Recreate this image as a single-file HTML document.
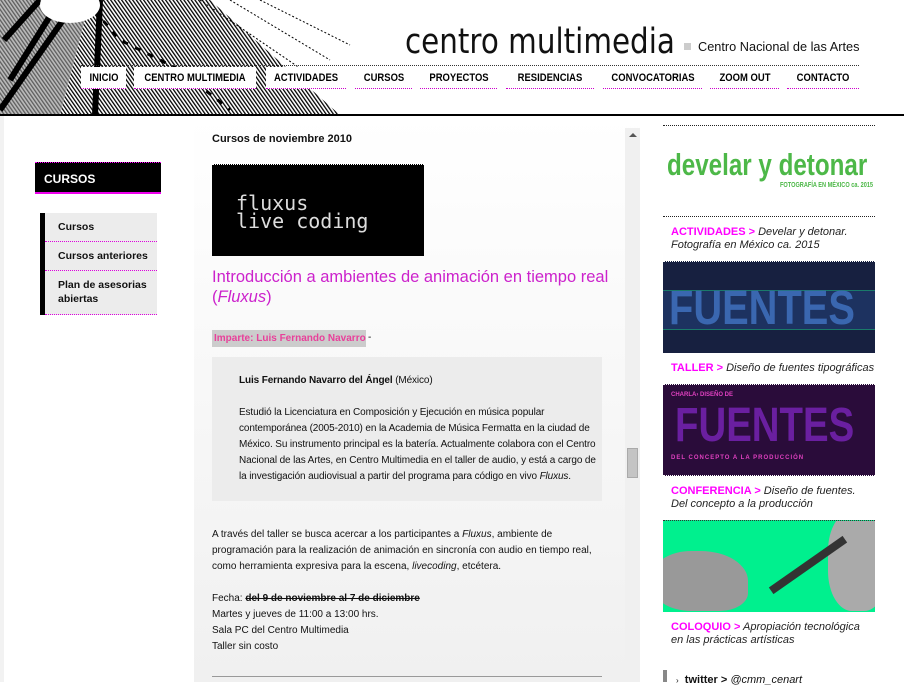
<!DOCTYPE html>
<html><head><meta charset="utf-8">
<style>
*{margin:0;padding:0;box-sizing:border-box}
body{width:904px;height:682px;overflow:hidden;background:#fff;font-family:"Liberation Sans",Arial,sans-serif;position:relative;color:#111}
.abs{position:absolute;white-space:nowrap}
.wrap{white-space:normal}
.nav a{position:absolute;top:67px;height:22px;background:#fff;color:#000;text-decoration:none;border-bottom:1px dotted #c0c;overflow:visible}
.nav a span{position:absolute;left:50%;top:5px;font:bold 11px "Liberation Sans",sans-serif;white-space:nowrap;transform:translateX(-50%) scaleX(0.86)}
.nav a.n{background:transparent}
.cap{font-size:11px;line-height:13px;color:#222;font-style:italic;white-space:normal}
.cap b{color:#f0f;font-style:normal}
.dot{border-top:1px dotted #222}
.sq{display:inline-block;transform-origin:0 0;white-space:nowrap}
</style></head><body>
<div class="abs" style="left:0;top:0;width:380px;height:115px;overflow:hidden;background:#fff">
<svg width="380" height="115">
<defs><pattern id="st" width="3" height="3" patternUnits="userSpaceOnUse" patternTransform="rotate(-35)"><rect width="1.3" height="3" fill="#000"/></pattern></defs>
<path d="M90 0 L210 0 L340 115 L60 115 Z" fill="url(#st)"/>
<path d="M0 0 L90 0 L60 115 L0 115Z" fill="#bbb"/>
<path d="M0 0 L90 0 L60 115 L0 115Z" fill="url(#st)" opacity="0.5"/>
<path d="M4 40 L40 0 M10 80 L60 0 M0 110 L70 10 M95 115 L100 0" stroke="#000" stroke-width="6"/>
<path d="M85 0 L120 40 L180 70 L230 110" stroke="#000" stroke-width="3" stroke-dasharray="6 8" fill="none"/>
<path d="M200 0 L310 75 M230 0 L330 60 M260 0 L350 45" stroke="#000" stroke-width="1" stroke-dasharray="2 2"/>
<ellipse cx="70" cy="5" rx="30" ry="18" fill="#fff"/>
</svg></div>
<div class="abs" style="left:405px;top:22px;font-size:35px;color:#111;font-family:'DejaVu Sans',sans-serif"><span class="sq" style="transform:scaleX(0.84)">centro multimedia</span></div>
<div class="abs" style="left:684px;top:43px;width:7px;height:7px;background:#ccc"></div>
<div class="abs" style="left:698px;top:39px;font-size:13px"><span class="sq" style="transform:scaleX(0.98)">Centro Nacional de las Artes</span></div>
<div class="abs" style="left:81px;top:65px;width:778px;border-top:1px dotted #333"></div>
<div class="nav">
<a style="left:81px;width:45px"><span>INICIO</span></a>
<a style="left:134px;width:122px"><span>CENTRO MULTIMEDIA</span></a>
<a style="left:266px;width:80px"><span>ACTIVIDADES</span></a>
<a class="n" style="left:355px;width:57px"><span>CURSOS</span></a>
<a class="n" style="left:420px;width:77px"><span>PROYECTOS</span></a>
<a class="n" style="left:506px;width:88px"><span>RESIDENCIAS</span></a>
<a class="n" style="left:603px;width:99px"><span>CONVOCATORIAS</span></a>
<a class="n" style="left:710px;width:69px"><span>ZOOM OUT</span></a>
<a class="n" style="left:787px;width:72px"><span>CONTACTO</span></a>
</div>
<div class="abs" style="left:0;top:114px;width:904px;height:2px;background:#000"></div>
<div class="abs" style="left:0;top:116px;width:4px;height:566px;background:#f2f2f2"></div>
<div class="abs" style="left:35px;top:162px;width:126px;height:32px;background:#000;border-top:1px dotted #f0f;border-bottom:2px solid #e0e;color:#fff;font-weight:bold;font-size:12px;padding:9px 0 0 9px">CURSOS</div>
<div class="abs wrap" style="left:40px;top:213px;width:117px;height:102px;background:#ececec;border-left:5px solid #000;font-size:10.5px;font-weight:bold">
<div style="height:29px;border-bottom:1px dotted #d0d;padding:8px 0 0 13px">Cursos</div>
<div style="height:29px;border-bottom:1px dotted #d0d;padding:8px 0 0 13px">Cursos anteriores</div>
<div style="height:44px;border-bottom:1px dotted #d0d;padding:7px 0 0 13px;line-height:14px">Plan de asesorias abiertas</div>
</div>
<div class="abs" style="left:194px;top:116px;width:446px;height:566px;background:linear-gradient(#fff,#f0f0f0)"></div>
<div class="abs" style="left:625px;top:128px;width:15px;height:554px;background:#f0f0f0"></div>
<div class="abs" style="left:629px;top:133px;width:0;height:0;border-left:4px solid transparent;border-right:4px solid transparent;border-bottom:4px solid #555"></div>
<div class="abs" style="left:627px;top:448px;width:11px;height:30px;background:#c4c4c4;border:1px solid #aaa"></div>
<div class="abs" style="left:212px;top:133px;font-size:11px;font-weight:bold">Cursos de noviembre 2010</div>
<div class="abs" style="left:212px;top:164px;width:212px;height:92px;background:#000;border-top:1px dotted #fff;color:#ddd;font:20px/18px 'DejaVu Sans Mono','Liberation Mono',monospace;padding:29px 0 0 24px">fluxus<br>live coding</div>
<div class="abs wrap" style="left:212px;top:267px;font-size:16.5px;line-height:20px;color:#c2c;width:410px">Introducción a ambientes de animación en tiempo real (<i>Fluxus</i>)</div>
<div class="abs" style="left:212px;top:330px;height:17px;width:154px;background:#ccc;color:#e8409a;font-size:10px;font-weight:bold;padding:3px 0 0 2px">Imparte: Luis Fernando Navarro</div>
<div class="abs" style="left:368px;top:332px;font-size:10px">-</div>
<div class="abs" style="left:212px;top:357px;width:390px;height:144px;background:#ececec"></div>
<div class="abs wrap" style="left:239px;top:373px;width:366px;font-size:10px;line-height:16px;letter-spacing:-0.12px">
<b>Luis Fernando Navarro del Ángel</b> (México)
<div style="margin-top:16px">Estudió la Licenciatura en Composición y Ejecución en música popular contemporánea (2005-2010) en la Academia de Música Fermatta en la ciudad de México. Su instrumento principal es la batería. Actualmente colabora con el Centro Nacional de las Artes, en Centro Multimedia en el taller de audio, y está a cargo de la investigación audiovisual a partir del programa para código en vivo <i>Fluxus</i>.</div>
</div>
<div class="abs wrap" style="left:212px;top:527px;width:395px;font-size:10px;line-height:16px">A través del taller se busca acercar a los participantes a <i>Fluxus</i>, ambiente de programación para la realización de animación en sincronía con audio en tiempo real, como herramienta expresiva para la escena, <i>livecoding</i>, etcétera.</div>
<div class="abs" style="left:212px;top:591px;font-size:10px;line-height:16px">Fecha: <b><s>del 9 de noviembre al 7 de diciembre</s></b><br>Martes y jueves de 11:00 a 13:00 hrs.<br>Sala PC del Centro Multimedia<br>Taller sin costo</div>
<div class="abs" style="left:212px;top:676px;width:390px;height:1px;background:#999"></div>
<div class="abs dot" style="left:663px;top:125px;width:212px"></div>
<div class="abs" style="left:667px;top:150px;font:bold 31px/30px 'Liberation Sans',sans-serif;color:#4db848"><span class="sq" style="transform:scaleX(0.78)">develar y detonar</span></div>
<div class="abs" style="left:780px;top:182px;font:bold 7px 'Liberation Sans',sans-serif;color:#4db848"><span class="sq" style="transform:scaleX(0.8)">FOTOGRAFÍA EN MÉXICO ca. 2015</span></div>
<div class="abs dot" style="left:663px;top:216px;width:212px"></div>
<div class="abs cap" style="left:671px;top:226px;width:200px"><b>ACTIVIDADES &gt;</b> Develar y detonar. Fotografía en México ca. 2015</div>
<div class="abs" style="left:663px;top:261px;width:212px;height:92px;background:#172040;border-top:1px dotted #fff;overflow:hidden">
<div style="position:absolute;left:0;top:28px;width:212px;height:40px;background:#1d3260;border-top:1px solid #1a7a6a;border-bottom:1px solid #1a7a6a"></div>
<div style="position:absolute;left:6px;top:22px;font:900 48px/50px 'Liberation Sans',sans-serif;color:#3a67b0"><span class="sq" style="transform:scaleX(0.83)">FUENTES</span></div></div>
<div class="abs cap" style="left:671px;top:362px"><b>TALLER &gt;</b> Diseño de fuentes tipográficas</div>
<div class="abs" style="left:663px;top:384px;width:212px;height:92px;background:#2a0c3a;border-top:1px dotted #fff;border-bottom:1px dotted #fff;overflow:hidden">
<div style="position:absolute;left:8px;top:7px;font:bold 6px sans-serif;color:#e040c0">CHARLA› DISEÑO DE</div>
<div style="position:absolute;left:12px;top:16px;font:900 48px/50px 'Liberation Sans',sans-serif;color:#6a1fa0"><span class="sq" style="transform:scaleX(0.8)">FUENTES</span></div>
<div style="position:absolute;left:8px;top:70px;font:bold 6px sans-serif;color:#e040c0;letter-spacing:1px">DEL CONCEPTO A LA PRODUCCIÓN</div></div>
<div class="abs cap" style="left:671px;top:485px;width:200px"><b>CONFERENCIA &gt;</b> Diseño de fuentes. Del concepto a la producción</div>
<div class="abs" style="left:663px;top:520px;width:212px;height:92px;background:#00f08e;border-top:1px dotted #333;overflow:hidden">
<div style="position:absolute;left:-10px;top:30px;width:95px;height:60px;background:#999;border-radius:40% 50% 30% 40%"></div>
<div style="position:absolute;left:165px;top:-10px;width:60px;height:100px;background:#aaa;border-radius:40%"></div>
<div style="position:absolute;left:100px;top:40px;width:90px;height:8px;background:#333;transform:rotate(-35deg)"></div></div>
<div class="abs cap" style="left:671px;top:621px;width:200px"><b>COLOQUIO &gt;</b> Apropiación tecnológica en las prácticas artísticas</div>
<div class="abs" style="left:663px;top:670px;width:4px;height:12px;background:#888"></div>
<div class="abs" style="left:676px;top:674px;font-size:11px"><span style="font-size:8px">›</span> &nbsp;<b>twitter &gt;</b> <i>@cmm_cenart</i></div>
</body></html>
